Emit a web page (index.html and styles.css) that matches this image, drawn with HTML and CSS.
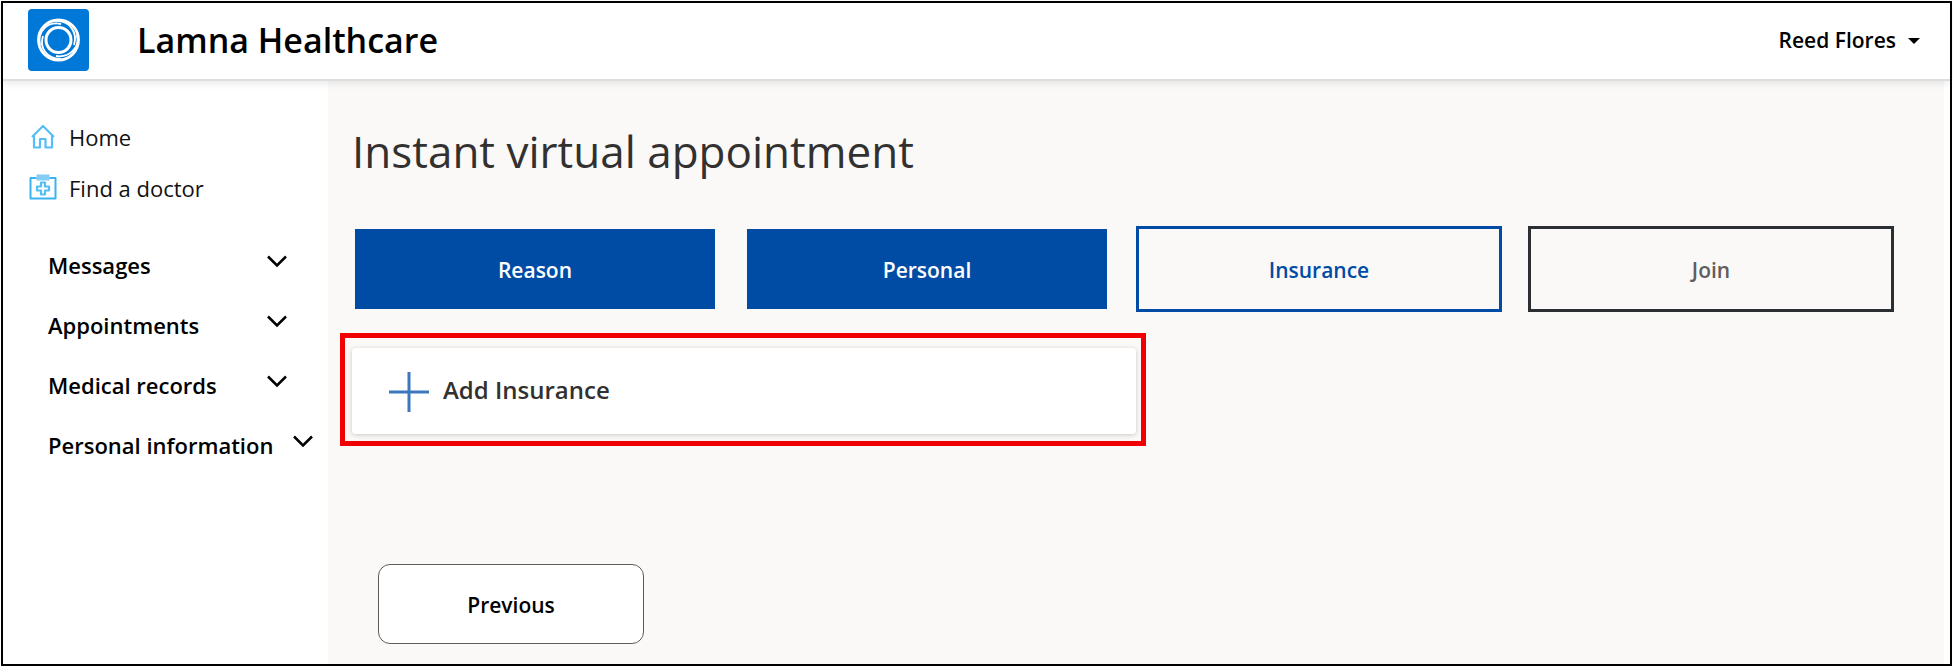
FILE: index.html
```html
<!DOCTYPE html>
<html lang="en">
<head>
<meta charset="utf-8">
<title>Lamna Healthcare</title>
<link rel="stylesheet" href="styles.css">
</head>
<body>
<div class="frame">
  <header class="header">
    <svg class="logo" viewBox="0 0 61 62" aria-hidden="true">
      <rect width="61" height="62" rx="4" fill="#0078d7"/>
      <g fill="none" stroke="#fff">
        <circle cx="30.500" cy="31" r="20" stroke-width="2.800"/>
        <circle cx="30.500" cy="31" r="12.500" stroke-width="3"/>
        <path d="M12 36C9 22 20 12 33 15M49 26C52 39 41 49 28 47M27 12C42 11 50 24 46 36M33 50C19 50 11 39 15 27" stroke-width="1.800"/>
      </g>
    </svg>
    <span class="brand">Lamna Healthcare</span>
    <button class="user" type="button">Reed Flores<svg class="caret" viewBox="0 0 12 6" aria-hidden="true"><path d="M0 0h12L6 6z"/></svg></button>
  </header>
  <div class="body">
    <nav class="sidebar">
      <a class="link" href="#"><svg class="icon" viewBox="0 0 28 26" aria-hidden="true"><path d="M3 14 14 3l11 11M5 12v12.500h6V16h5.500v8.500H23V12" fill="none" stroke="#55bff5" stroke-width="2.200" stroke-linejoin="round"/></svg>Home</a>
      <a class="link" href="#"><svg class="icon" viewBox="0 0 28 26" aria-hidden="true"><path d="M7.500 6.500V.5h13v6z" fill="#83cdf6"/><path d="M7.500 4h-6v20.500h25V4h-6" fill="none" stroke="#3ab3f3" stroke-width="2" stroke-linejoin="round"/><path d="M12 8.500h4v4h4v4h-4v4h-4v-4H8v-4h4z" fill="none" stroke="#55bff5" stroke-width="2.200" stroke-linejoin="round"/></svg>Find a doctor</a>
      <div class="menu">
        <button class="menu-item" type="button"><span class="menu-label">Messages</span><svg class="chevron" viewBox="0 0 20 13" aria-hidden="true"><path d="m1 1.500 9 9 9-9"/></svg></button>
        <button class="menu-item" type="button"><span class="menu-label">Appointments</span><svg class="chevron" viewBox="0 0 20 13" aria-hidden="true"><path d="m1 1.500 9 9 9-9"/></svg></button>
        <button class="menu-item" type="button"><span class="menu-label">Medical records</span><svg class="chevron" viewBox="0 0 20 13" aria-hidden="true"><path d="m1 1.500 9 9 9-9"/></svg></button>
        <button class="menu-item" type="button"><span class="menu-label">Personal information</span><svg class="chevron" viewBox="0 0 20 13" aria-hidden="true"><path d="m1 1.500 9 9 9-9"/></svg></button>
      </div>
    </nav>
    <main class="main">
      <h1 class="title">Instant virtual appointment</h1>
      <div class="steps">
        <button class="step step-done" type="button">Reason</button>
        <button class="step step-done" type="button">Personal</button>
        <button class="step step-current" type="button">Insurance</button>
        <button class="step step-next" type="button">Join</button>
      </div>
      <div class="highlight">
        <button class="card" type="button"><svg class="plus" viewBox="0 0 40 40" aria-hidden="true"><path d="M20 0v40M0 20h40"/></svg>Add Insurance</button>
      </div>
      <button class="previous" type="button">Previous</button>
    </main>
  </div>
</div>
</body>
</html>
```
FILE: styles.css
```css
* { box-sizing: border-box; }

body {
  margin: 0;
  padding: 1px;
  min-height: 100vh;
  display: flex;
  background: #fff;
  color: #000;
  font-family: "Open Sans", "Noto Sans", sans-serif;
  font-size: 22px;
}

button {
  margin: 0;
  padding: 0;
  border: 0;
  background: none;
  color: inherit;
  font: inherit;
  cursor: pointer;
}

svg { flex: none; }

.frame {
  flex: 1;
  display: flex;
  flex-direction: column;
  border: 2px solid #000;
}

.header {
  position: relative;
  display: flex;
  align-items: center;
  height: 78px;
  padding: 0 30px 2px 25px;
  background: #fff;
  border-bottom: 2px solid #dedede;
  box-shadow: 0 2px 8px rgba(0, 0, 0, 0.1);
}

.logo { width: 61px; height: 62px; }
.brand { margin-left: 48px; font-size: 34px; font-weight: 600; }
.user { margin-left: auto; display: flex; align-items: center; gap: 12px; font-size: 21px; font-weight: 600; }
.caret { width: 12px; height: 6px; margin-top: 2px; }

.body { flex: 1; display: flex; }

.sidebar { flex: none; width: 325px; padding: 30px 0 0 26px; }

.link {
  display: flex;
  align-items: center;
  gap: 12px;
  height: 51px;
  color: #111;
  text-decoration: none;
}

.icon { width: 28px; height: 26px; margin-bottom: 2px; }

.menu { padding: 22px 0 0 19px; }

.menu-item {
  display: flex;
  align-items: center;
  gap: 20px;
  height: 60px;
  font-weight: 600;
}

.menu-label { min-width: 199px; text-align: left; white-space: nowrap; }
.chevron { width: 20px; height: 13px; margin-bottom: 8px; fill: none; stroke: #000; stroke-width: 2.5; }

.main {
  flex: 1;
  margin-right: 6px;
  padding: 36px 50px 18px 24px;
  background: #faf9f8;
}

.title { margin: 0; color: #323130; font-size: 44px; line-height: 68px; font-weight: 400; }

.steps {
  display: grid;
  grid-template-columns: repeat(4, 1fr);
  gap: 26px;
  margin-top: 41px;
}

.step { height: 86px; padding-top: 2px; border: 3px solid; font-size: 21px; font-weight: 600; }
.step-done { background: #004ca5 padding-box; border-color: transparent; color: #fff; }
.step-current { border-color: #004ca5; color: #004ca5; }
.step-next { border-color: #2b2e33; color: #605e5c; }

.highlight {
  width: calc(50% + 35px);
  margin: 21px 0 0 -12px;
  padding: 10px 5px 7px 7px;
  border: 5px solid #f00000;
}

.card {
  display: flex;
  align-items: center;
  gap: 14px;
  width: 100%;
  height: 86px;
  padding: 0 37px 4px;
  border-radius: 4px;
  background: #fff;
  box-shadow: 0 1px 5px rgba(0, 0, 0, 0.2);
  color: #323130;
  font-size: 24px;
  font-weight: 600;
}

.plus { width: 40px; height: 40px; margin-top: 6px; stroke: #3c78be; stroke-width: 3; }

.previous {
  display: block;
  width: 266px;
  height: 80px;
  margin: 118px 0 0 26px;
  padding-top: 2px;
  border: 1px solid #5c5c5c;
  border-radius: 12px;
  background: #fff;
  font-size: 21px;
  font-weight: 600;
}
```
